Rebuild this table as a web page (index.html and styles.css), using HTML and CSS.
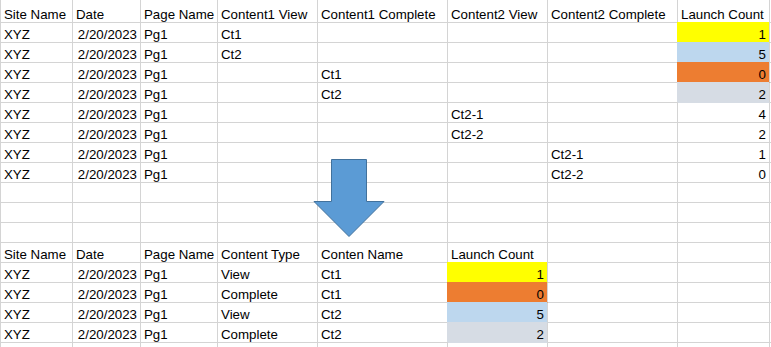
FILE: index.html
```html
<!DOCTYPE html>
<html>
<head>
<meta charset="utf-8">
<link rel="stylesheet" href="styles.css">
</head>
<body>
<div class="page">
  <div class="sheet">
    <div class="row head">
      <div>Site Name</div><div>Date</div><div>Page Name</div><div>Content1 View</div><div>Content1 Complete</div><div>Content2 View</div><div>Content2 Complete</div><div>Launch Count</div><div class="edge"></div>
    </div>
    <div class="row">
      <div>XYZ</div><div class="num">2/20/2023</div><div>Pg1</div><div>Ct1</div><div></div><div></div><div></div><div class="num fill yellow">1</div><div class="edge"></div>
    </div>
    <div class="row">
      <div>XYZ</div><div class="num">2/20/2023</div><div>Pg1</div><div>Ct2</div><div></div><div></div><div></div><div class="num fill blue">5</div><div class="edge"></div>
    </div>
    <div class="row">
      <div>XYZ</div><div class="num">2/20/2023</div><div>Pg1</div><div></div><div>Ct1</div><div></div><div></div><div class="num fill orange">0</div><div class="edge"></div>
    </div>
    <div class="row">
      <div>XYZ</div><div class="num">2/20/2023</div><div>Pg1</div><div></div><div>Ct2</div><div></div><div></div><div class="num fill grey">2</div><div class="edge"></div>
    </div>
    <div class="row">
      <div>XYZ</div><div class="num">2/20/2023</div><div>Pg1</div><div></div><div></div><div>Ct2-1</div><div></div><div class="num">4</div><div class="edge"></div>
    </div>
    <div class="row">
      <div>XYZ</div><div class="num">2/20/2023</div><div>Pg1</div><div></div><div></div><div>Ct2-2</div><div></div><div class="num">2</div><div class="edge"></div>
    </div>
    <div class="row">
      <div>XYZ</div><div class="num">2/20/2023</div><div>Pg1</div><div></div><div></div><div></div><div>Ct2-1</div><div class="num">1</div><div class="edge"></div>
    </div>
    <div class="row">
      <div>XYZ</div><div class="num">2/20/2023</div><div>Pg1</div><div></div><div></div><div></div><div>Ct2-2</div><div class="num">0</div><div class="edge"></div>
    </div>
    <div class="row">
      <div></div><div></div><div></div><div></div><div></div><div></div><div></div><div></div><div class="edge"></div>
    </div>
    <div class="row">
      <div></div><div></div><div></div><div></div><div></div><div></div><div></div><div></div><div class="edge"></div>
    </div>
    <div class="row">
      <div></div><div></div><div></div><div></div><div></div><div></div><div></div><div></div><div class="edge"></div>
    </div>
    <div class="row">
      <div>Site Name</div><div>Date</div><div>Page Name</div><div>Content Type</div><div>Conten Name</div><div>Launch Count</div><div></div><div></div><div class="edge"></div>
    </div>
    <div class="row">
      <div>XYZ</div><div class="num">2/20/2023</div><div>Pg1</div><div>View</div><div>Ct1</div><div class="num fill yellow">1</div><div></div><div></div><div class="edge"></div>
    </div>
    <div class="row">
      <div>XYZ</div><div class="num">2/20/2023</div><div>Pg1</div><div>Complete</div><div>Ct1</div><div class="num fill orange">0</div><div></div><div></div><div class="edge"></div>
    </div>
    <div class="row">
      <div>XYZ</div><div class="num">2/20/2023</div><div>Pg1</div><div>View</div><div>Ct2</div><div class="num fill blue">5</div><div></div><div></div><div class="edge"></div>
    </div>
    <div class="row">
      <div>XYZ</div><div class="num">2/20/2023</div><div>Pg1</div><div>Complete</div><div>Ct2</div><div class="num fill grey">2</div><div></div><div></div><div class="edge"></div>
    </div>
    <div class="row last">
      <div></div><div></div><div></div><div></div><div></div><div></div><div></div><div></div><div class="edge"></div>
    </div>
  </div>
  <svg class="arrow" width="73" height="81" viewBox="0 0 73 81">
    <polygon points="18.5,1.5 53.5,1.5 53.5,43.5 71,43.5 36,78.5 1,43.5 18.5,43.5" fill="#5b9bd5" stroke="#41719c" stroke-width="1"/>
  </svg>
</div>
</body>
</html>
```

FILE: styles.css
```css
html, body {
  margin: 0;
  padding: 0;
  background: #ffffff;
}

.page {
  position: relative;
  width: 771px;
  height: 347px;
  overflow: hidden;
}

.sheet {
  display: grid;
  grid-template-columns: 72px 68px 77px 100px 130px 100px 130px 92px 1fr;
  grid-template-rows: 23px;
  grid-auto-rows: 20px;
  border-left: 1px solid #d4d4d4;
  font-family: "Liberation Sans", Arial, sans-serif;
  font-size: 13.3px;
  line-height: 15px;
  color: #000000;
}

.row {
  display: contents;
}

.row > div {
  box-sizing: border-box;
  border-right: 1px solid #d4d4d4;
  border-bottom: 1px solid #d4d4d4;
  padding: 0 3px 0 3px;
  display: flex;
  align-items: flex-end;
  white-space: nowrap;
}

.row > .num {
  justify-content: flex-end;
  padding-right: 3px;
}

.row > .edge {
  border-right: none;
  padding: 0;
}

.row > .fill {
  border-bottom-color: var(--fill);
  background: var(--fill);
  box-shadow: -1px -1px 0 0 var(--fill);
}

.yellow { --fill: #ffff00; }
.blue { --fill: #bdd7ee; }
.orange { --fill: #ed7d31; }
.grey { --fill: #d6dce4; }

.arrow {
  position: absolute;
  left: 313px;
  top: 158px;
}
```
